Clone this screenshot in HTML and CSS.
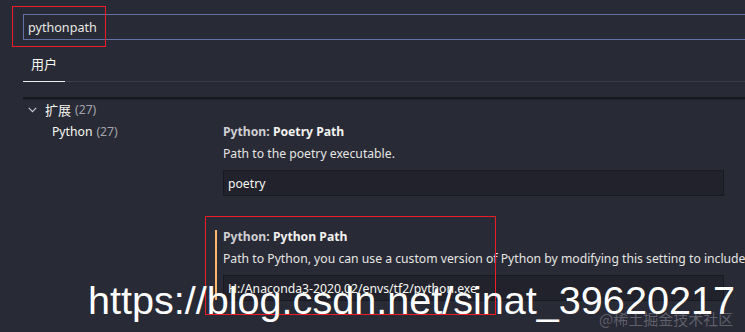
FILE: index.html
```html
<!DOCTYPE html>
<html lang="zh">
<head>
<meta charset="utf-8">
<title>Settings</title>
<link rel="stylesheet" href="styles.css">
</head>
<body>
<div class="page">
  <div class="search">pythonpath</div>
  <div class="tabs">
    <div class="tab">用户</div>
  </div>
  <div class="shadow"></div>
  <div class="body">
    <div class="tree">
      <div class="tree-item group">
        <svg class="chev" width="9" height="6" viewBox="0 0 9 6"><path d="M0.8 0.8 L4.5 4.6 L8.2 0.8" fill="none" stroke="#c5c8d6" stroke-width="1.2"/></svg>
        <span class="cjk">扩展</span><span class="count">(27)</span>
      </div>
      <div class="tree-item child"><span>Python</span><span class="count">(27)</span></div>
    </div>
    <div class="settings">
      <div class="setting">
        <div class="title"><span class="cat">Python: </span>Poetry Path</div>
        <div class="desc">Path to the poetry executable.</div>
        <div class="input">poetry</div>
      </div>
      <div class="setting focused">
        <div class="title"><span class="cat">Python: </span>Python Path</div>
        <div class="desc">Path to Python, you can use a custom version of Python by modifying this setting to include the full path.</div>
        <div class="input">H:/Anaconda3-2020.02/envs/tf2/python.exe</div>
      </div>
    </div>
  </div>
  <div class="mark mark-search"></div>
  <div class="mark mark-setting"></div>
  <div class="wm-url">https://blog.csdn.net/sinat_39620217</div>
  <div class="wm-juejin">@稀土掘金技术社区</div>
</div>
</body>
</html>
```
FILE: styles.css
```css
html, body {
  margin: 0;
  padding: 0;
  background: #282a36;
}
body {
  width: 745px;
  height: 332px;
  overflow: hidden;
  font-family: "Noto Sans", "Noto Sans CJK SC", sans-serif;
  font-size: 12.2px;
  color: #f8f8f2;
}
.page {
  position: relative;
  width: 745px;
  height: 332px;
  overflow: hidden;
  padding: 14px 0 0 23px;
  box-sizing: border-box;
}
.search {
  height: 26px;
  box-sizing: border-box;
  border: 1px solid #6272a4;
  border-right: none;
  padding-left: 4px;
  line-height: 25px;
  font-size: 12.6px;
  color: #e8e8e2;
}
.tabs {
  display: flex;
  margin-top: 15px;
  border-bottom: 1px solid #3b3c44;
}
.tab {
  padding: 0 8px 8px 8px;
  line-height: 18px;
  font-size: 13px;
  border-bottom: 1px solid #f0f0f0;
  margin-bottom: -1px;
  font-family: "Noto Sans CJK SC", sans-serif;
}
.shadow {
  margin-top: 15px;
  height: 2px;
  background: #17181e;
  box-shadow: 0 1px 1px #1f2029;
}
.body {
  display: flex;
}
.tree {
  width: 190px;
  flex: none;
}
.tree-item {
  height: 22px;
  line-height: 22px;
  display: flex;
  align-items: center;
  white-space: nowrap;
}
.tree-item.group {
  padding-left: 5px;
}
.cjk {
  font-family: "Noto Sans CJK SC", sans-serif;
  font-size: 13px;
}
.chev {
  margin-right: 8px;
}
.tree-item.child {
  padding-left: 29px;
}
.count {
  color: #a3a4ab;
  margin-left: 4px;
}
.settings {
  flex: 1;
  min-width: 0;
  padding-left: 10px;
}
.setting {
  position: relative;
  padding: 22px 0 8px 0;
}
.setting.focused::before {
  content: "";
  position: absolute;
  left: -8px;
  top: 26px;
  bottom: 9px;
  width: 2px;
  background: #ffb86c;
}
.title {
  line-height: 20px;
  padding-top: 1px;
  font-weight: bold;
  color: #f2f2ee;
  white-space: nowrap;
}
.cat {
  color: #cfcfd2;
}
.desc {
  margin-top: 1px;
  line-height: 20px;
  padding-top: 1px;
  white-space: nowrap;
  color: #e6e6e2;
}
.input {
  margin-top: 6px;
  width: 501px;
  height: 26px;
  box-sizing: border-box;
  background: #21222c;
  border: 1px solid #191a21;
  padding-left: 4px;
  line-height: 25px;
  color: #f8f8f2;
}
.mark {
  position: absolute;
  border: 1px solid #ee1c25;
}
.mark-search {
  left: 12px;
  top: 6px;
  width: 92px;
  height: 39px;
}
.mark-setting {
  left: 205px;
  top: 216px;
  width: 289px;
  height: 97px;
}
.wm-url {
  position: absolute;
  left: 88px;
  top: 277px;
  font-family: "Liberation Sans", Arial, sans-serif;
  font-size: 39.6px;
  line-height: 46px;
  color: #ffffff;
  white-space: nowrap;
}
.wm-juejin {
  position: absolute;
  left: 599px;
  top: 309px;
  font-family: "Noto Sans CJK SC", sans-serif;
  font-size: 15px;
  line-height: 20px;
  color: rgba(200, 200, 205, 0.35);
  white-space: nowrap;
}
```
